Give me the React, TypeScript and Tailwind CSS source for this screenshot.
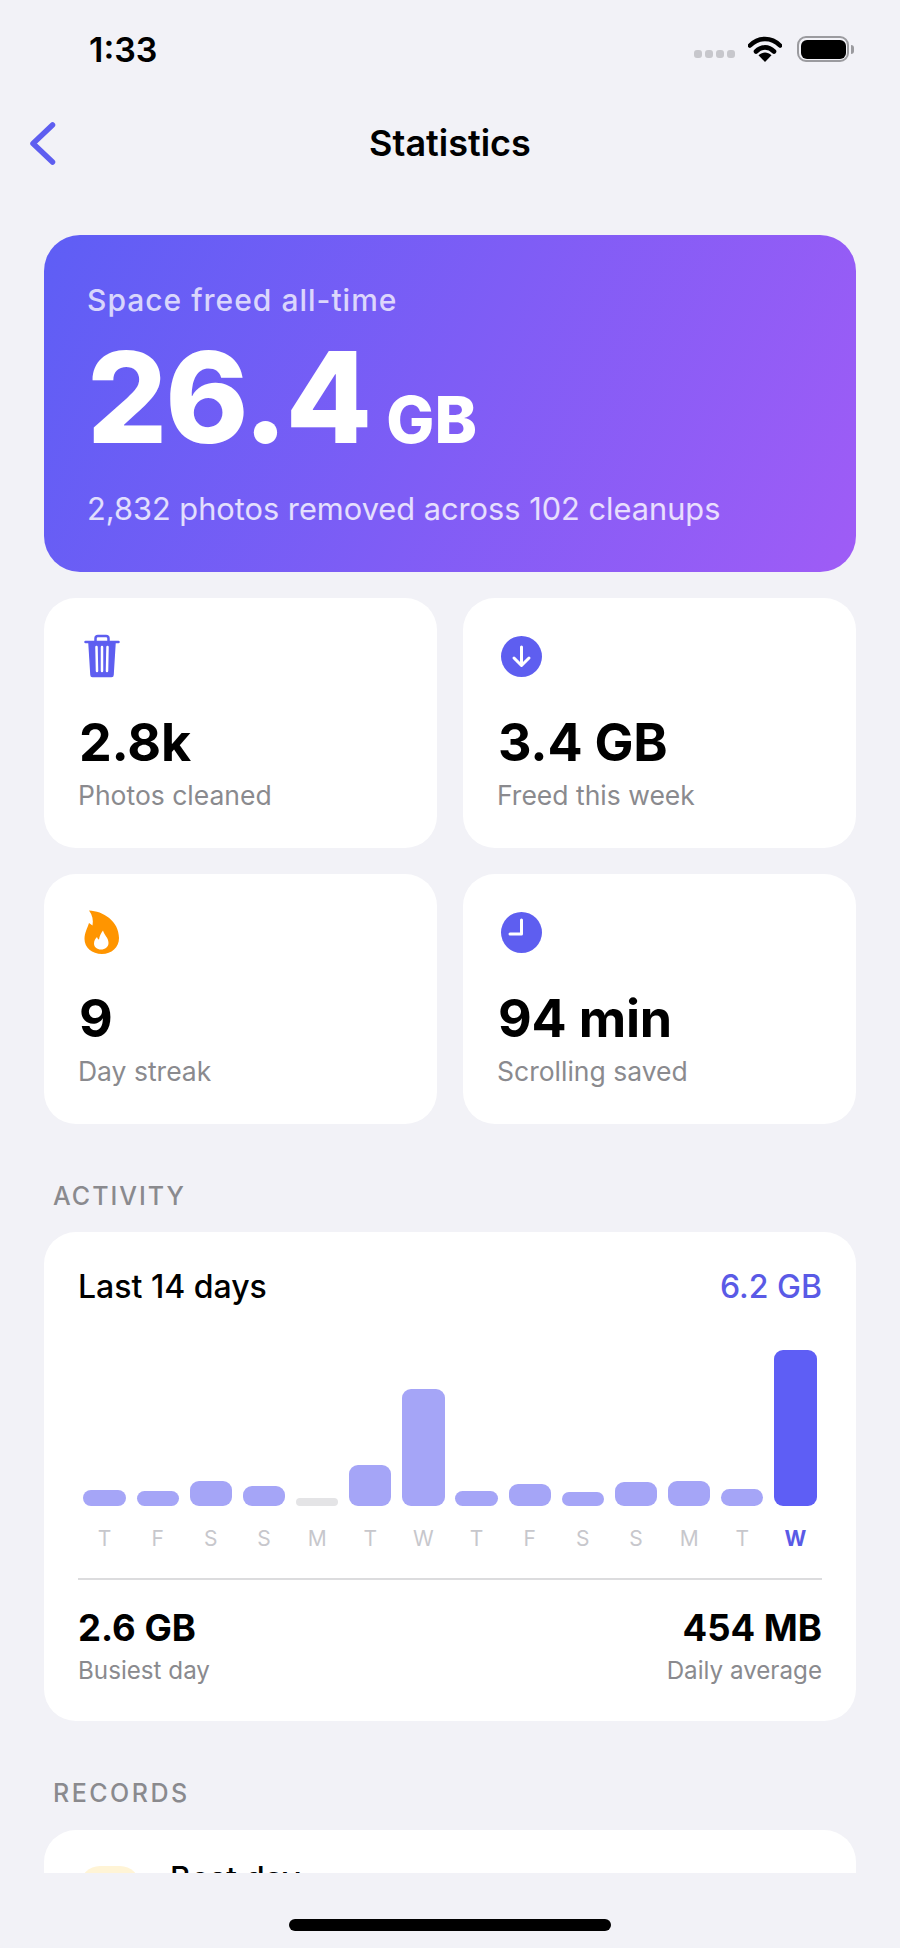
import React from "react";

const font = { fontFamily: "Inter, 'Liberation Sans', sans-serif" };

const bars = [
  { d: "T", h: 16 }, { d: "F", h: 15 }, { d: "S", h: 25 }, { d: "S", h: 20 }, { d: "M", h: 8, z: true },
  { d: "T", h: 41 }, { d: "W", h: 117 }, { d: "T", h: 15 }, { d: "F", h: 22 }, { d: "S", h: 14 },
  { d: "S", h: 24 }, { d: "M", h: 25 }, { d: "T", h: 17 }, { d: "W", h: 156, a: true },
];

function Trash() {
  return (
    <svg width="36" height="44" viewBox="0 0 36 44" fill="none" stroke="#5e5ef0" strokeLinecap="round" strokeLinejoin="round">
      <path d="M11.500 7V4.500A2.500 2.500 0 0 1 14 2h8a2.500 2.500 0 0 1 2.500 2.500V7" strokeWidth="2.500" />
      <path d="M1.500 8h33" strokeWidth="2.500" />
      <path d="M5 9l2 32a1.500 1.500 0 0 0 1.500 1.500h19A1.500 1.500 0 0 0 29 41l2-32z" fill="#5e5ef0" strokeWidth="1.500" />
      <path d="M12.500 13l.5 24M18 13v24M23.500 13l-.5 24" stroke="#fff" strokeWidth="2.500" />
    </svg>
  );
}

function Flame() {
  return (
    <svg width="36" height="44" viewBox="0 0 36 44">
      <path d="M5 .5C19 1 35 11 35 28 35 37.500 27.500 44 18 44 8 44 .5 37.500 .5 29 .5 22.500 3.500 18 5 13L8.500 15.500C9.500 10 8.500 5 5 .5z" fill="#ff9500" />
      <path d="M19 20.500C20 25 24.500 27.500 24.500 33 24.500 37 21 39.500 17 39.500 13 39.500 10 37 10 33.500 10 30.500 11.500 28.500 13 27 13.500 28.500 14 29.500 15 29.500 15.500 26 17 23 19 20.500z" fill="#fff" />
    </svg>
  );
}

function ArrowBadge() {
  return (
    <svg width="41" height="41" viewBox="0 0 41 41">
      <circle cx="20.500" cy="20.500" r="20.500" fill="#5e5ef0" />
      <path d="M20.500 11v18M13 22l7.500 7.500L28 22" fill="none" stroke="#fff" strokeWidth="3" strokeLinecap="round" strokeLinejoin="round" />
    </svg>
  );
}

function ClockBadge() {
  return (
    <svg width="41" height="41" viewBox="0 0 41 41">
      <circle cx="20.500" cy="20.500" r="20.500" fill="#5e5ef0" />
      <path d="M20.500 8v14H9" fill="none" stroke="#fff" strokeWidth="3" strokeLinecap="round" strokeLinejoin="round" />
    </svg>
  );
}

function Stat({ icon, value, label }: { icon: React.ReactNode; value: string; label: string }) {
  return (
    <div className="h-[250px] rounded-[32px] bg-white pl-[34px] flex flex-col">
      <div className="w-[48px] h-[46px] mt-[35px] flex items-center justify-center">{icon}</div>
      <div className="mt-[36px] ml-[1px] text-[52px] leading-[56px] font-bold text-black tracking-[-0.2px]">{value}</div>
      <div className="text-[26.5px] leading-[34px] mt-[7px] text-[#8a8a8e]">{label}</div>
    </div>
  );
}

export default function App() {
  return (
    <div className="w-[900px] h-[1948px] bg-[#f2f2f7] flex flex-col overflow-hidden relative" style={font}>
      {/* status bar */}
      <div className="h-[100px] shrink-0 flex items-start justify-between pl-[89px] pr-[46px]">
        <div className="mt-[29px] text-[34px] leading-[41px] font-semibold text-black">1:33</div>
        <div className="flex items-center mt-[36px] h-[26px]">
          <div className="flex gap-[3px] mt-[10px]">
            <span className="w-[8px] h-[8px] rounded-[3px] bg-[#c7c7cc]" />
            <span className="w-[8px] h-[8px] rounded-[3px] bg-[#c7c7cc]" />
            <span className="w-[8px] h-[8px] rounded-[3px] bg-[#c7c7cc]" />
            <span className="w-[8px] h-[8px] rounded-[3px] bg-[#c7c7cc]" />
          </div>
          <svg className="ml-[13px]" width="34" height="26" viewBox="0 0 34 26" fill="none">
            <path d="M2 9.500C10.500 .8 23.500 .8 32 9.500" stroke="#000" strokeWidth="4.600" strokeLinecap="round" />
            <path d="M8 15.500C13.500 10 20.500 10 26 15.500" stroke="#000" strokeWidth="4.600" strokeLinecap="round" />
            <path d="M17 26l-6.500-6.800C14.500 15.700 19.500 15.700 23.500 19.200z" fill="#000" />
          </svg>
          <div className="ml-[15px] w-[52px] h-[26px] rounded-[9px] border-[2px] border-[#9b9b9f] p-[1.5px]">
            <div className="w-full h-full rounded-[6px] bg-black" />
          </div>
          <div className="ml-[2px] w-[3px] h-[9px] rounded-r-[3px] bg-[#9b9b9f]" />
        </div>
      </div>

      {/* nav */}
      <div className="h-[88px] shrink-0 flex items-center justify-center relative">
        <svg className="absolute left-[28px] top-[20px]" width="30" height="46" viewBox="0 0 30 46" fill="none">
          <path d="M24.500 5L5 23.500 24.500 42" stroke="#5e5ef0" strokeWidth="5.500" strokeLinecap="round" strokeLinejoin="round" />
        </svg>
        <div className="text-[36px] leading-[44px] font-semibold text-black mt-[-2px]">Statistics</div>
      </div>

      {/* scroll area */}
      <div className="flex-1 min-h-0 overflow-hidden px-[44px] pt-[47px]">
        <div className="h-[337px] rounded-[36px] bg-[linear-gradient(115deg,#5e5ef5,#9f5cf6)] pl-[43px] pt-[47px]">
          <div className="text-[30px] leading-[36px] font-medium text-white/75 tracking-[1px]">Space freed all-time</div>
          <div className="flex items-baseline mt-[15px] h-[128px] text-white font-extrabold">
            <span className="text-[126px] leading-[128px] tracking-[-2px]">26.4</span>
            <span className="text-[64px] leading-[128px] ml-[16px]">GB</span>
          </div>
          <div className="mt-[30px] text-[30.75px] leading-[36px] text-white/80">2,832 photos removed across 102 cleanups</div>
        </div>

        <div className="grid grid-cols-2 gap-[26px] mt-[26px]">
          <Stat icon={<Trash />} value="2.8k" label="Photos cleaned" />
          <Stat icon={<ArrowBadge />} value="3.4 GB" label="Freed this week" />
          <Stat icon={<Flame />} value="9" label="Day streak" />
          <Stat icon={<ClockBadge />} value="94 min" label="Scrolling saved" />
        </div>

        <div className="mt-[57px] pl-[9px] text-[25px] leading-[30px] font-medium tracking-[2px] text-[#8a8a8e]">ACTIVITY</div>
        <div className="mt-[21px] h-[489px] rounded-[32px] bg-white px-[34px] pt-[36px]">
          <div className="flex justify-between text-[32px] leading-[38px]">
            <span className="font-medium text-black">Last 14 days</span>
            <span className="font-medium text-[#5a5ae6]">6.2 GB</span>
          </div>
          <div className="flex items-end h-[156px] mt-[44px]">
            {bars.map((b, i) => (
              <div key={i} className="flex-1 px-[5.4px] flex items-end">
                <div
                  className={`w-full rounded-[9px] ${b.a ? "bg-[#5e5ef5]" : b.z ? "bg-[#e4e4e6]" : "bg-[#a5a5f7]"}`}
                  style={{ height: b.h }}
                />
              </div>
            ))}
          </div>
          <div className="flex mt-[20px]">
            {bars.map((b, i) => (
              <div key={i} className={`flex-1 text-center text-[21px] leading-[26px] ${b.a ? "font-bold text-[#5a5ae6]" : "text-[#c7c7cc]"}`}>{b.d}</div>
            ))}
          </div>
          <div className="h-[2px] bg-[#dcdcde] mt-[26px]" />
          <div className="flex justify-between mt-[26px]">
            <div>
              <div className="text-[36.5px] leading-[44px] font-bold text-black">2.6 GB</div>
              <div className="text-[24.2px] leading-[32px] mt-[5px] text-[#8a8a8e]">Busiest day</div>
            </div>
            <div className="text-right">
              <div className="text-[36.5px] leading-[44px] font-bold text-black">454 MB</div>
              <div className="text-[24.2px] leading-[32px] mt-[5px] text-[#8a8a8e]">Daily average</div>
            </div>
          </div>
        </div>

        <div className="mt-[57px] pl-[9px] text-[25px] leading-[30px] font-medium tracking-[2.500px] text-[#8a8a8e]">RECORDS</div>
        <div className="mt-[22px] h-[200px] rounded-t-[32px] bg-white pl-[36px] pt-[36px] flex items-start">
          <div className="w-[60px] h-[60px] rounded-[20px] bg-[#fff4d6]" />
          <div className="ml-[30px] text-[31.5px] leading-[38px] font-medium text-black mt-[-7px]">Best day</div>
        </div>
      </div>

      {/* home indicator */}
      <div className="h-[75px] shrink-0 flex justify-center pt-[46px]">
        <div className="w-[322px] h-[12px] rounded-full bg-black" />
      </div>
    </div>
  );
}
